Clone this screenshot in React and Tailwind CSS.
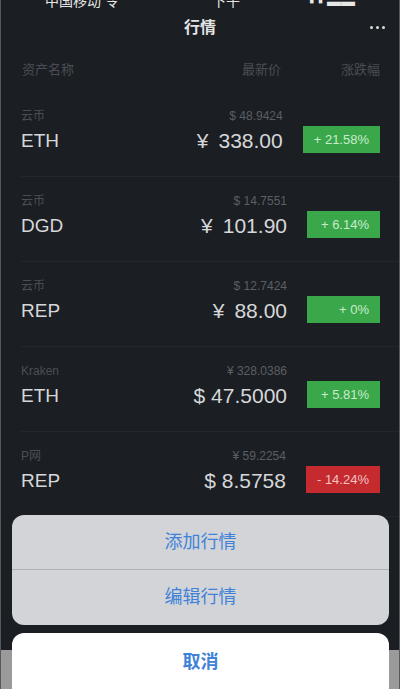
import React from "react";

const rows = [
	{ market: "云币", name: "ETH", sub: "$ 48.9424", price: "¥\u2009 338.00", change: "+ 21.58%", up: true },
	{ market: "云币", name: "DGD", sub: "$ 14.7551", price: "¥\u2009 101.90", change: "+ 6.14%", up: true },
	{ market: "云币", name: "REP", sub: "$ 12.7424", price: "¥\u2009 88.00", change: "+ 0%", up: true },
	{ market: "Kraken", name: "ETH", sub: "¥ 328.0386", price: "$ 47.5000", change: "+ 5.81%", up: true },
	{ market: "P网", name: "REP", sub: "¥ 59.2254", price: "$ 8.5758", change: "- 14.24%", up: false },
];

const font = { fontFamily: '"Liberation Sans", "Noto Sans CJK SC", sans-serif' };

const Row = ({ item }) => (
	<div className="h-[85px] ml-5 border-b border-[#23272c] flex items-end pb-[22px]">
		<div className="flex-1 flex flex-col">
			<span className="text-[12px] leading-[16px] text-[#4b4f55]">{item.market}</span>
			<span className="mt-[4px] text-[19px] leading-[26px] text-[#d6d7d9]">{item.name}</span>
		</div>
		<div className="flex flex-col items-end">
			<span className="text-[12px] leading-[16px] text-[#5b5f65]">{item.sub}</span>
			<span className="mt-[4px] text-[21px] leading-[26px] text-[#d6d7d9]">{item.price}</span>
		</div>
		<div
			className={`ml-5 mr-[19px] mb-[1px] h-[27px] min-w-[73px] px-[11px] flex items-center justify-end text-[13px] ${
				item.up ? "bg-[#3aa84a] text-[#c9ebcd]" : "bg-[#c42a2e] text-[#f2c3c4]"
			}`}>
			{item.change}
		</div>
	</div>
);

const App = () => {
	return (
		<div
			className="relative w-[400px] h-[689px] overflow-hidden bg-[#1b1e23] border-x border-[#55585c] flex flex-col"
			style={font}>
			{/* status bar, mostly cut off */}
			<div className="h-[8px] overflow-hidden flex items-end justify-between px-[44px] text-[14px] leading-[14px] text-[#e6e6e6]">
				<span>中国移动 令</span>
				<span className="ml-6">下午</span>
				<span>▪ ▪ ▬▬</span>
			</div>

			<div className="relative h-[40px] flex items-center justify-center">
				<span className="text-[16px] font-bold text-[#e4e4e4]">行情</span>
				<div className="absolute right-[14px] top-[18px] flex gap-[3px]">
					<span className="w-[3px] h-[3px] rounded-full bg-[#dcdcdc]" />
					<span className="w-[3px] h-[3px] rounded-full bg-[#dcdcdc]" />
					<span className="w-[3px] h-[3px] rounded-full bg-[#dcdcdc]" />
				</div>
			</div>

			<div className="h-[44px] flex items-center pl-[21px] pr-[19px] text-[13px] text-[#4a4e54]">
				<span className="flex-1">资产名称</span>
				<span className="mr-[60px]">最新价</span>
				<span>涨跌幅</span>
			</div>

			<div className="flex flex-col">
				{rows.map((item, i) => (
					<Row key={i} item={item} />
				))}
			</div>

			<div className="mt-auto h-[39px] bg-[#9a9a9a]" />

			{/* action sheet */}
			<div className="absolute left-[11px] right-[10px] top-[515px] flex flex-col gap-[8px]">
				<div className="rounded-[12px] bg-[#d2d4d8] overflow-hidden">
					<div className="h-[55px] flex items-center justify-center text-[18px] text-[#3f82d8] border-b border-[#aeb0b4]">
						添加行情
					</div>
					<div className="h-[55px] flex items-center justify-center text-[18px] text-[#3f82d8]">
						编辑行情
					</div>
				</div>
				<div className="h-[66px] rounded-[12px] bg-white flex items-start pt-[16px] justify-center text-[18px] font-bold text-[#3f82d8]">
					取消
				</div>
			</div>
		</div>
	);
};

export default App;
